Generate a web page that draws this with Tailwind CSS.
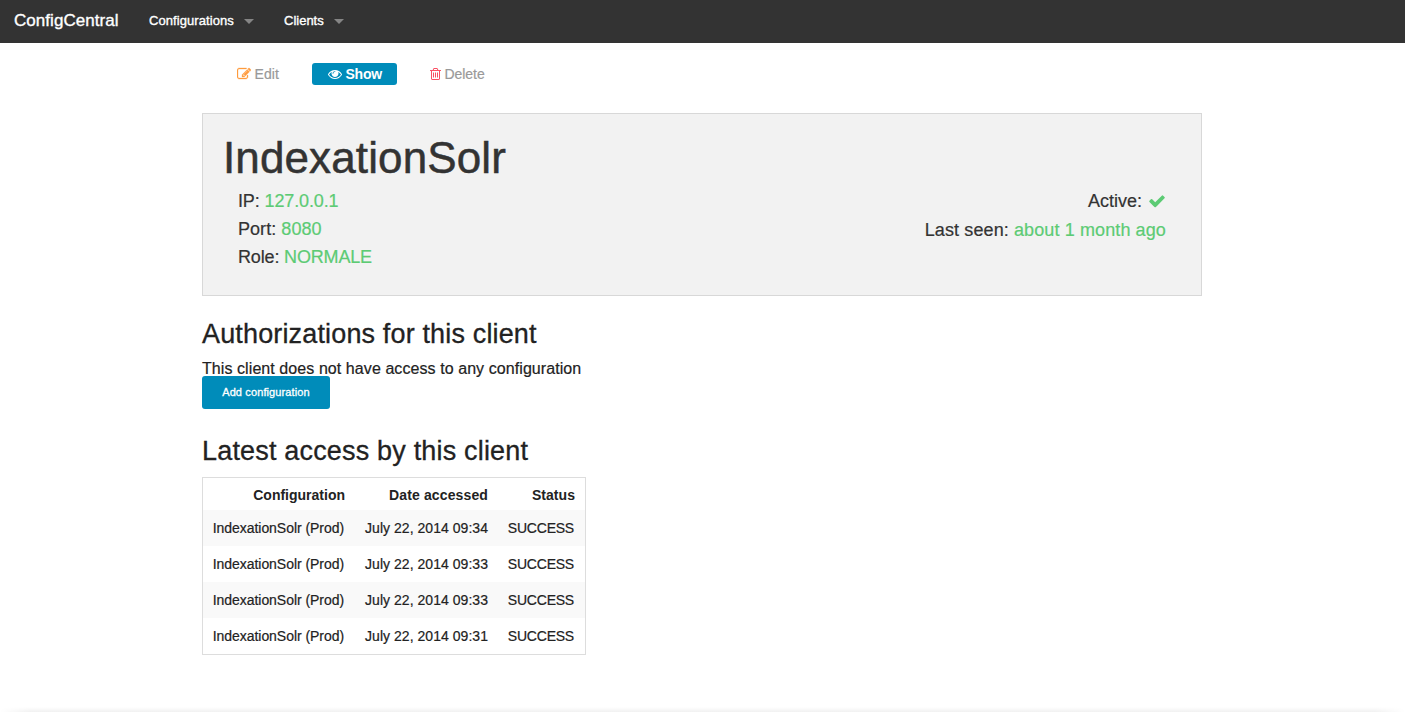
<!DOCTYPE html>
<html lang="en">
<head>
<meta charset="utf-8">
<title>ConfigCentral</title>
<script src="https://cdn.jsdelivr.net/npm/@tailwindcss/browser@4"></script>
</head>
<body class="relative h-[712px] overflow-hidden bg-white font-['Liberation_Sans',Arial,sans-serif] text-[#222] [-webkit-text-stroke:0.2px_currentColor]">
<nav class="flex h-[43px] items-center bg-[#333] pb-px pl-3.5 text-white [-webkit-text-stroke:0.35px_white]">
  <a class="w-[135px] text-[17px] tracking-[0.04px]">ConfigCentral</a>
  <a class="flex w-[135px] items-center text-[13px]"><span class="w-[95px] tracking-[0.08px]">Configurations</span><span class="border-x-[5px] border-t-[5px] border-x-transparent border-t-[#858585]"></span></a>
  <a class="flex items-center text-[13px]"><span class="w-[50px]">Clients</span><span class="border-x-[5px] border-t-[5px] border-x-transparent border-t-[#858585]"></span></a>
</nav>
<main class="ml-[202px] w-[1000px] pt-5">
  <div class="flex h-[22px] items-center text-sm text-[#999]">
    <a class="ml-[35px] flex w-[75px] items-center gap-[3.5px] tracking-[0.1px]"><svg class="size-[14px] fill-[#ff9b3e] stroke-[#ff9b3e] stroke-[40]" viewBox="0 0 1792 1792"><path d="M888 1184l116-116-152-152-116 116v56h96v96h56zm440-720q-16-16-33 1l-350 350q-17 17-1 33t33-1l350-350q17-17 1-33zm80 594v190q0 119-84.5 203.5t-203.5 84.5h-832q-119 0-203.5-84.5t-84.5-203.5v-832q0-119 84.5-203.5t203.5-84.5h832q63 0 117 25 15 7 18 23 3 17-9 29l-49 49q-14 14-32 8-23-6-45-6h-832q-66 0-113 47t-47 113v832q0 66 47 113t113 47h832q66 0 113-47t47-113v-126q0-13 9-22l64-64q15-15 35-7t20 29zm-96-738l288 288-672 672h-288v-288zm444 132l-92 92-288-288 92-92q28-28 68-28t68 28l152 152q28 28 28 68t-28 68z"/></svg>Edit</a>
    <a class="flex h-[22px] w-[85px] items-center gap-[3.5px] rounded-[3px] bg-[#008cba] pl-4 font-bold tracking-[-0.25px] text-white [-webkit-text-stroke:0px]"><svg class="size-[14px] fill-white" viewBox="0 0 1792 1792"><path d="M1664 960q-152-236-381-353 61 104 61 225 0 185-131.5 316.5t-316.5 131.5-316.5-131.5-131.5-316.5q0-121 61-225-229 117-381 353 133 205 333.5 326.5t434.5 121.5 434.5-121.5 333.5-326.5zm-720-384q0-20-14-34t-34-14q-125 0-214.5 89.5t-89.5 214.5q0 20 14 34t34 14 34-14 14-34q0-86 61-147t147-61q20 0 34-14t14-34zm848 384q0 34-20 69-140 230-376.5 368.5t-499.5 138.5-499.5-139-376.5-368q-20-35-20-69t20-69q140-229 376.5-368t499.5-139 499.5 139 376.5 368q20 35 20 69z"/></svg>Show</a>
    <a class="ml-[33px] flex items-center gap-[3.5px] tracking-[-0.05px]"><svg class="h-[14px] w-[11px] fill-[#fa4f63]" viewBox="192 0 1408 1792"><path d="M704 736v576q0 14-9 23t-23 9h-64q-14 0-23-9t-9-23v-576q0-14 9-23t23-9h64q14 0 23 9t9 23zm256 0v576q0 14-9 23t-23 9h-64q-14 0-23-9t-9-23v-576q0-14 9-23t23-9h64q14 0 23 9t9 23zm256 0v576q0 14-9 23t-23 9h-64q-14 0-23-9t-9-23v-576q0-14 9-23t23-9h64q14 0 23 9t9 23zm128 724v-948h-896v948q0 22 7 40.5t14.5 27 10.5 8.5h832q3 0 10.5-8.5t14.5-27 7-40.5zm-672-1076h448l-48-117q-7-9-17-11h-317q-10 2-17 11zm928 32v64q0 14-9 23t-23 9h-96v948q0 83-47 143.5t-113 60.5h-832q-66 0-113-58.5t-47-141.5v-952h-96q-14 0-23-9t-9-23v-64q0-14 9-23t23-9h309l70-167q15-37 54-63t79-26h320q40 0 79 26t54 63l70 167h309q14 0 23 9t9 23z"/></svg>Delete</a>
  </div>
  <section class="mt-7 h-[183px] border border-[#d8d8d8] bg-[#f2f2f2] px-5 pt-4 text-[#333]">
    <h1 class="mb-px h-[56px] text-[44px] leading-[56px] tracking-[0.12px] [-webkit-text-stroke:0.5px_#333]">IndexationSolr</h1>
    <div class="flex justify-between pr-[15px] pl-[15px] text-lg leading-7">
      <div>
        <p class="tracking-[-0.13px]">IP: <span class="text-[#5ccb74]">127.0.0.1</span></p>
        <p class="tracking-[0.05px]">Port: <span class="text-[#5ccb74]">8080</span></p>
        <p class="tracking-[-0.16px]">Role: <span class="text-[#5ccb74]">NORMALE</span></p>
      </div>
      <div class="text-right">
        <p class="mb-px flex items-center justify-end gap-1.5">Active: <svg class="size-[18px] fill-[#5ccb74]" viewBox="0 0 1792 1792"><path d="M1671 566q0 40-28 68l-724 724-136 136q-28 28-68 28t-68-28l-136-136-362-362q-28-28-28-68t28-68l136-136q28-28 68-28t68 28l294 295 656-657q28-28 68-28t68 28l136 136q28 28 28 68z"/></svg></p>
        <p class="tracking-[0.11px]">Last seen: <span class="text-[#5ccb74]">about 1 month ago</span></p>
      </div>
    </div>
  </section>
  <h2 class="mt-5 h-[36px] text-[27px] leading-[36px] tracking-[0.15px] [-webkit-text-stroke:0.3px_#222]">Authorizations for this client</h2>
  <p class="mt-[5px] h-6 text-base leading-6 tracking-[0.075px]">This client does not have access to any configuration</p>
  <a class="relative -mt-[5px] flex h-[33px] w-32 items-center justify-center rounded-[3px] bg-[#008cba] text-[11px] tracking-[0.12px] text-white [-webkit-text-stroke:0.3px_white]">Add configuration</a>
  <h2 class="mt-6 h-[36px] text-[27px] leading-[36px] tracking-[0.18px] [-webkit-text-stroke:0.3px_#222]">Latest access by this client</h2>
  <div class="mt-2 h-[178px] w-[384px] border border-[#ddd] text-sm">
    <div class="grid h-8 grid-cols-[142px_143px_87px] items-center pt-0.5 text-right font-bold [-webkit-text-stroke:0px]"><span>Configuration</span><span class="tracking-[0.13px]">Date accessed</span><span class="tracking-[0.05px]">Status</span></div>
    <div class="grid h-9 grid-cols-[141px_144px_86px] items-center bg-[#f9f9f9] text-right"><span class="tracking-[-0.05px]">IndexationSolr (Prod)</span><span class="tracking-[0.04px]">July 22, 2014 09:34</span><span class="tracking-[-0.22px]">SUCCESS</span></div>
    <div class="grid h-9 grid-cols-[141px_144px_86px] items-center text-right"><span class="tracking-[-0.05px]">IndexationSolr (Prod)</span><span class="tracking-[0.04px]">July 22, 2014 09:33</span><span class="tracking-[-0.22px]">SUCCESS</span></div>
    <div class="grid h-9 grid-cols-[141px_144px_86px] items-center bg-[#f9f9f9] text-right"><span class="tracking-[-0.05px]">IndexationSolr (Prod)</span><span class="tracking-[0.04px]">July 22, 2014 09:33</span><span class="tracking-[-0.22px]">SUCCESS</span></div>
    <div class="grid h-9 grid-cols-[141px_144px_86px] items-center text-right"><span class="tracking-[-0.05px]">IndexationSolr (Prod)</span><span class="tracking-[0.04px]">July 22, 2014 09:31</span><span class="tracking-[-0.22px]">SUCCESS</span></div>
  </div>
</main>
<div class="absolute inset-x-0 bottom-0 h-[5px] bg-linear-to-b from-white to-[#f1f1f1] [mask-image:linear-gradient(to_right,transparent,black_30px,black_calc(100%-30px),transparent)]"></div>
</body>
</html>
